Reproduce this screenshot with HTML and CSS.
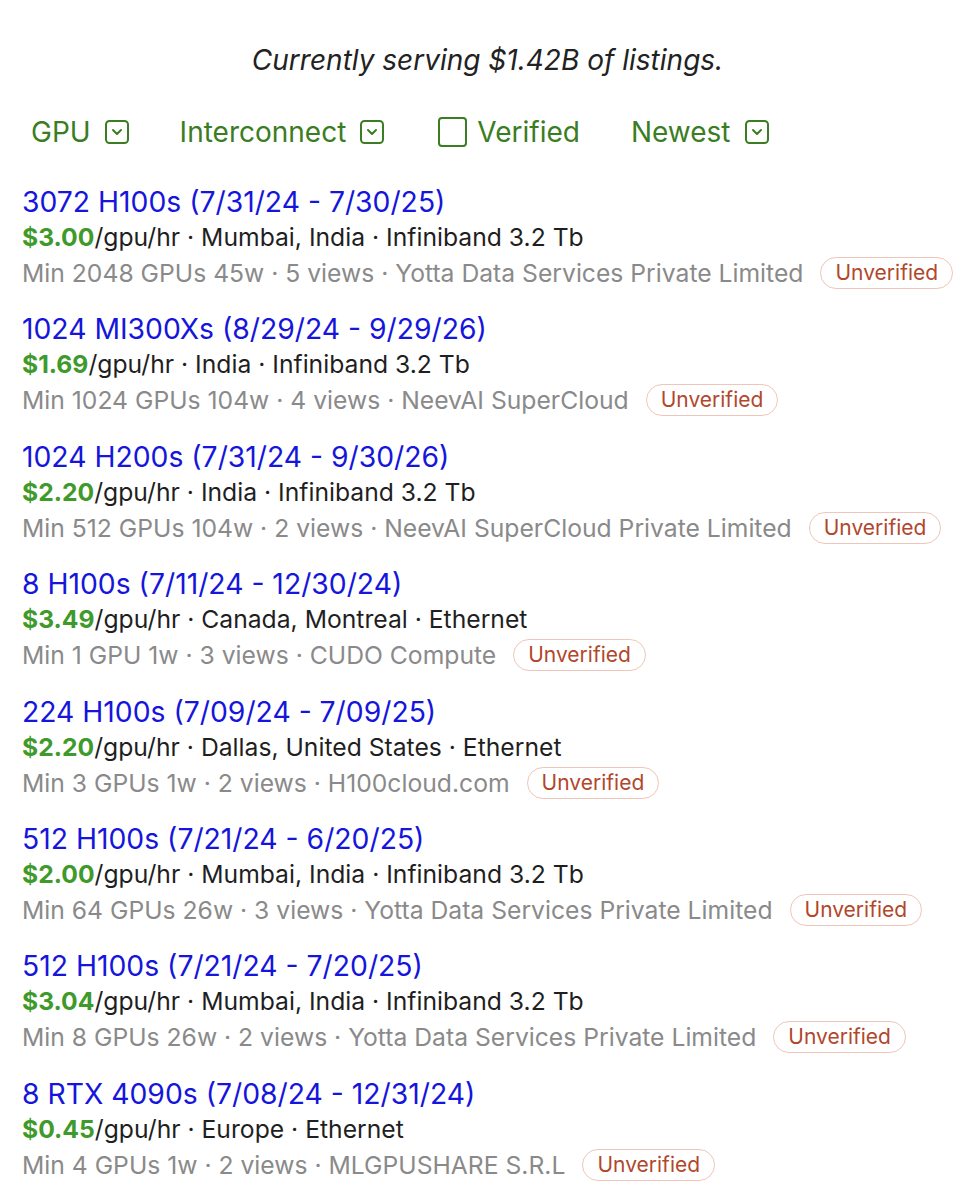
FILE: index.html
```html
<!DOCTYPE html>
<html>
<head>
<meta charset="utf-8">
<link rel="stylesheet" href="styles.css">
</head>
<body>
<div class="page">
  <p class="tagline">Currently serving $1.42B of listings.</p>
  <div class="filters">
    <div class="filter"><span>GPU</span><svg class="dd" viewBox="0 0 24 24"><rect x="1" y="1" width="22" height="22" rx="3.5"/><path d="M8 10l4 4 4-4"/></svg></div>
    <div class="filter"><span>Interconnect</span><svg class="dd" viewBox="0 0 24 24"><rect x="1" y="1" width="22" height="22" rx="3.5"/><path d="M8 10l4 4 4-4"/></svg></div>
    <div class="filter check"><span class="box"></span><span>Verified</span></div>
    <div class="filter"><span>Newest</span><svg class="dd" viewBox="0 0 24 24"><rect x="1" y="1" width="22" height="22" rx="3.5"/><path d="M8 10l4 4 4-4"/></svg></div>
  </div>
  <div class="list">
    <div class="item">
      <div class="title">3072 H100s (7/31/24 - 7/30/25)</div>
      <div class="price"><b>$3.00</b>/gpu/hr · Mumbai, India · Infiniband 3.2 Tb</div>
      <div class="meta"><span>Min 2048 GPUs 45w · 5 views · Yotta Data Services Private Limited</span><span class="badge">Unverified</span></div>
    </div>
    <div class="item">
      <div class="title">1024 MI300Xs (8/29/24 - 9/29/26)</div>
      <div class="price"><b>$1.69</b>/gpu/hr · India · Infiniband 3.2 Tb</div>
      <div class="meta"><span>Min 1024 GPUs 104w · 4 views · NeevAI SuperCloud</span><span class="badge">Unverified</span></div>
    </div>
    <div class="item">
      <div class="title">1024 H200s (7/31/24 - 9/30/26)</div>
      <div class="price"><b>$2.20</b>/gpu/hr · India · Infiniband 3.2 Tb</div>
      <div class="meta"><span>Min 512 GPUs 104w · 2 views · NeevAI SuperCloud Private Limited</span><span class="badge">Unverified</span></div>
    </div>
    <div class="item">
      <div class="title">8 H100s (7/11/24 - 12/30/24)</div>
      <div class="price"><b>$3.49</b>/gpu/hr · Canada, Montreal · Ethernet</div>
      <div class="meta"><span>Min 1 GPU 1w · 3 views · CUDO Compute</span><span class="badge">Unverified</span></div>
    </div>
    <div class="item">
      <div class="title">224 H100s (7/09/24 - 7/09/25)</div>
      <div class="price"><b>$2.20</b>/gpu/hr · Dallas, United States · Ethernet</div>
      <div class="meta"><span>Min 3 GPUs 1w · 2 views · H100cloud.com</span><span class="badge">Unverified</span></div>
    </div>
    <div class="item">
      <div class="title">512 H100s (7/21/24 - 6/20/25)</div>
      <div class="price"><b>$2.00</b>/gpu/hr · Mumbai, India · Infiniband 3.2 Tb</div>
      <div class="meta"><span>Min 64 GPUs 26w · 3 views · Yotta Data Services Private Limited</span><span class="badge">Unverified</span></div>
    </div>
    <div class="item">
      <div class="title">512 H100s (7/21/24 - 7/20/25)</div>
      <div class="price"><b>$3.04</b>/gpu/hr · Mumbai, India · Infiniband 3.2 Tb</div>
      <div class="meta"><span>Min 8 GPUs 26w · 2 views · Yotta Data Services Private Limited</span><span class="badge">Unverified</span></div>
    </div>
    <div class="item">
      <div class="title">8 RTX 4090s (7/08/24 - 12/31/24)</div>
      <div class="price"><b>$0.45</b>/gpu/hr · Europe · Ethernet</div>
      <div class="meta"><span>Min 4 GPUs 1w · 2 views · MLGPUSHARE S.R.L</span><span class="badge">Unverified</span></div>
    </div>
  </div>
</div>
</body>
</html>
```
FILE: styles.css
```css
html, body {
  margin: 0;
  padding: 0;
  background: #ffffff;
}
body {
  font-family: Inter, "Noto Sans", sans-serif;
  color: #1f1f1f;
}
.page {
  padding: 40px 0 0 22px;
}
.tagline {
  margin: 0;
  text-align: center;
  font-style: italic;
  font-size: 28px;
  line-height: 40px;
  color: #222;
  padding-right: 22px;
}
.filters {
  display: flex;
  align-items: center;
  gap: 51px;
  margin-top: 32px;
  padding-left: 9px;
  color: #3a7d22;
  font-size: 28px;
  line-height: 40px;
}
.filter {
  display: flex;
  align-items: center;
  gap: 14px;
}
.filter.check {
  gap: 10px;
}
.filter.check {
  margin-left: 3px;
}
.dd {
  width: 24px;
  height: 24px;
  fill: none;
  stroke: #3a7d22;
  stroke-width: 2;
  stroke-linecap: round;
  stroke-linejoin: round;
}
.box {
  width: 25px;
  height: 26px;
  border: 2.5px solid #3a7d22;
  border-radius: 4px;
}
.list {
  margin-top: 33px;
  display: flex;
  flex-direction: column;
  gap: 21.4px;
}
.item {
  font-size: 24.7px;
  line-height: 35px;
}
.title {
  color: #1515dc;
  font-size: 28.3px;
}
.price b {
  color: #3f9a2c;
  font-weight: 700;
}
.meta {
  color: #8a8a8a;
  display: flex;
  align-items: center;
  gap: 17px;
  line-height: 36px;
}
.badge {
  font-size: 21px;
  line-height: 30px;
  color: #b1472c;
  border: 1.5px solid #efc6b9;
  border-radius: 17px;
  padding: 0 14px;
}
```
